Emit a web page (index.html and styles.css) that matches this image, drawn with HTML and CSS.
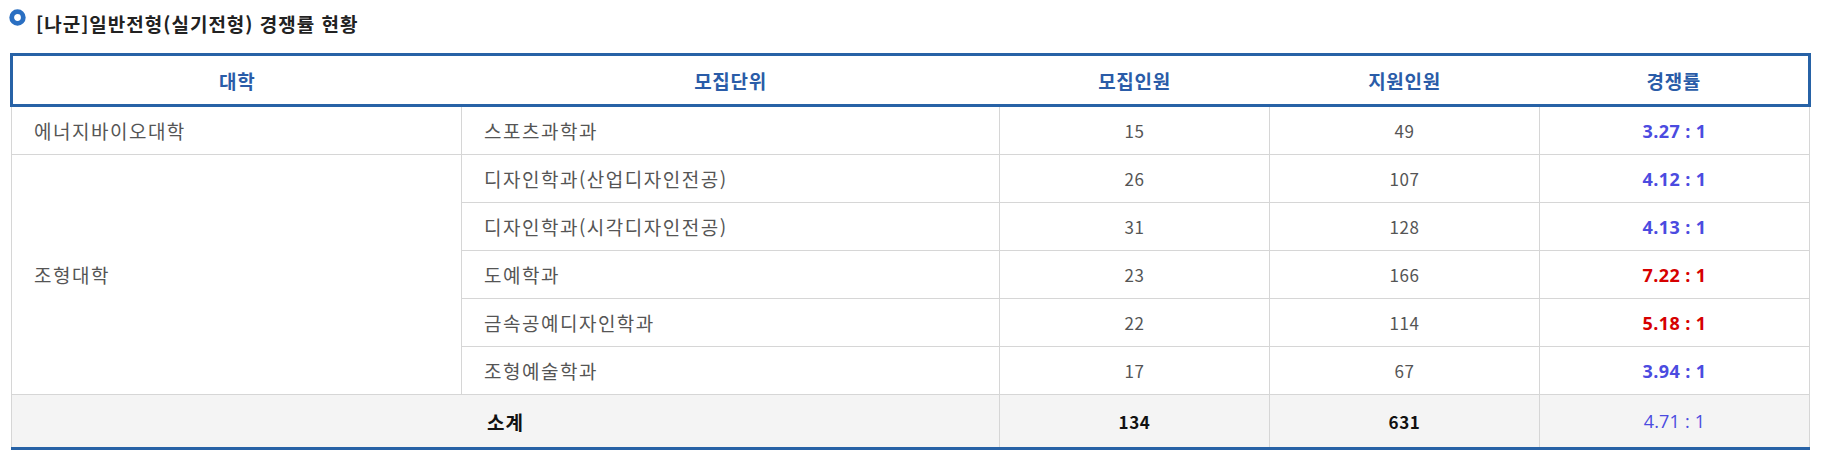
FILE: index.html
```html
<!DOCTYPE html>
<html lang="ko">
<head>
<meta charset="utf-8">
<title>[나군]일반전형(실기전형) 경쟁률 현황</title>
<link rel="stylesheet" href="styles.css">
</head>
<body>
<div class="page">
  <h3 class="title">
    <svg class="bullet" width="17" height="17" viewBox="0 0 17 17" aria-hidden="true"><circle cx="8.5" cy="8.5" r="5.8" fill="#fff" stroke="#2a6fc2" stroke-width="4.8"/></svg>
    <span>[나군]일반전형(실기전형) 경쟁률 현황</span>
  </h3>
  <table class="rate">
    <colgroup>
      <col class="c-univ"><col class="c-unit"><col class="c-num"><col class="c-num"><col class="c-num">
    </colgroup>
    <thead>
      <tr><th class="first">대학</th><th>모집단위</th><th>모집인원</th><th>지원인원</th><th class="last">경쟁률</th></tr>
    </thead>
    <tbody>
      <tr><td class="left">에너지바이오대학</td><td class="left">스포츠과학과</td><td>15</td><td>49</td><td class="ratio blue">3.27 : 1</td></tr>
      <tr><td class="left" rowspan="5">조형대학</td><td class="left">디자인학과(산업디자인전공)</td><td>26</td><td>107</td><td class="ratio blue">4.12 : 1</td></tr>
      <tr><td class="left">디자인학과(시각디자인전공)</td><td>31</td><td>128</td><td class="ratio blue">4.13 : 1</td></tr>
      <tr><td class="left">도예학과</td><td>23</td><td>166</td><td class="ratio red">7.22 : 1</td></tr>
      <tr><td class="left">금속공예디자인학과</td><td>22</td><td>114</td><td class="ratio red">5.18 : 1</td></tr>
      <tr><td class="left">조형예술학과</td><td>17</td><td>67</td><td class="ratio blue">3.94 : 1</td></tr>
    </tbody>
    <tfoot>
      <tr><td colspan="2" class="sum label">소계</td><td class="sum">134</td><td class="sum">631</td><td class="sum-ratio">4.71 : 1</td></tr>
    </tfoot>
  </table>
</div>
</body>
</html>
```

FILE: styles.css
```css
html, body {
  margin: 0;
  padding: 0;
  background: #fff;
}
body {
  font-family: "Noto Sans CJK KR", "Noto Sans", sans-serif;
  color: #555;
}
.page {
  padding: 0 11px 0 10px;
}
.title {
  display: flex;
  align-items: center;
  gap: 10px;
  height: 46px;
  margin: 0;
  font-size: 19px;
  font-weight: 700;
  color: #222;
  letter-spacing: 1px;
}
.bullet {
  align-self: flex-start;
  margin-top: 9px;
  margin-left: -1px;
  flex: none;
}
.rate {
  width: 1800px;
  border-collapse: collapse;
  margin-top: 7px;
  table-layout: fixed;
  font-size: 17px;
}
.c-univ { width: 450px; }
.c-unit { width: 538px; }
.c-num { width: 270px; }
.rate th {
  height: 48px;
  padding: 0;
  font-size: 19px;
  letter-spacing: 0.7px;
  color: #2a5ca8;
  font-weight: 700;
  border-top: 3px solid #2762a6;
  border-bottom: 3px solid #2762a6;
}
.rate th.first { border-left: 3px solid #2762a6; }
.rate th.last { border-right: 3px solid #2762a6; }
.rate td {
  height: 47px;
  padding: 0 22px;
  text-align: center;
  border: 1px solid #d6d6d6;
  color: #555;
  letter-spacing: 0.6px;
}
.rate td.left {
  text-align: left;
  font-size: 19px;
  letter-spacing: 1.5px;
}
.rate td.ratio {
  font-family: "Open Sans", "Noto Sans", sans-serif;
  font-size: 18px;
  font-weight: 700;
  letter-spacing: 0.4px;
}
.rate td.blue { color: #4b4be0; }
.rate td.red { color: #d60000; }
.rate tfoot td {
  height: 52px;
  background: #f4f4f4;
  border-bottom: 3px solid #2762a6;
}
.rate td.sum {
  color: #111;
  font-weight: 700;
}
.rate td.label {
  font-size: 19px;
  letter-spacing: 1px;
}
.rate td.sum-ratio {
  font-family: "Open Sans", "Noto Sans", sans-serif;
  font-size: 18px;
  letter-spacing: 0.2px;
  color: #4b4be0;
}
```
